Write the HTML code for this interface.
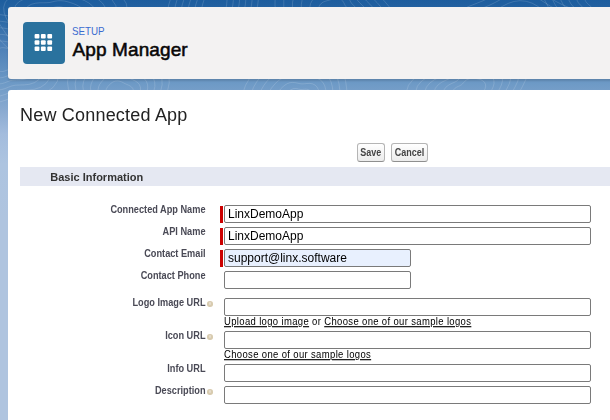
<!DOCTYPE html>
<html><head><meta charset="utf-8">
<style>
html,body{margin:0;padding:0;-webkit-font-smoothing:antialiased}
body{width:610px;height:420px;overflow:hidden;position:relative;font-family:"Liberation Sans",sans-serif;
background:linear-gradient(to bottom,#1d5d9e 0px,#2d6aa6 22px,#4a7eb6 44px,#6e9ac6 84px,#88a9d0 109px,#a3bcdd 134px,#adc4e0 164px,#afc4df 220px,#afc4df 420px);}
.abs{position:absolute;white-space:nowrap}
#hdr{position:absolute;left:8px;top:7px;width:640px;height:72px;background:#f3f2f2;border-radius:3px;box-shadow:0 2px 2px rgba(0,0,0,.12)}
#icon{position:absolute;left:23px;top:22px;width:42px;height:42px;background:#2a729e;border-radius:4px}
.dot{position:absolute;width:4.7px;height:4.7px;background:#fff;border-radius:1px}
#setup{left:72px;top:24.5px;font-size:11px;line-height:12px;color:#3a6bd0;transform:scaleX(0.89);transform-origin:0 0}
#appm{left:72.6px;top:39.5px;letter-spacing:0.1px;font-size:19px;line-height:20px;font-weight:normal;-webkit-text-stroke:0.55px #080707;color:#080707;transform:scaleX(1.0);transform-origin:0 0}
#card{position:absolute;left:8px;top:90px;width:640px;height:400px;background:#fff;border-radius:3px}
#title{left:20px;top:105px;letter-spacing:0.2px;font-size:18px;line-height:20px;color:#222}
.btn{position:absolute;top:143px;height:19px;box-sizing:border-box;border:1px solid #b5b5b5;border-bottom-color:#8f8f8f;border-radius:3px;background:linear-gradient(#fff,#ececec);font-size:10px;font-weight:bold;color:#454545;text-align:center;line-height:17px}
.btn span{display:inline-block;transform:scaleX(0.9)}
#band{position:absolute;left:20px;top:167px;width:600px;height:19px;background:#e5e8f2}
#bi{left:50.3px;top:170px;font-size:11px;line-height:14px;font-weight:bold;color:#333}
.lbl{position:absolute;right:404.5px;font-size:9.2px;line-height:11px;font-weight:bold;color:#4a4a56;text-align:right;white-space:nowrap;transform:translateY(0.4px) scaleY(1.1);transform-origin:0 8.5px}
.req{position:absolute;left:220px;width:3px;background:#c00}
.inp{position:absolute;left:224px;height:18px;box-sizing:border-box;border:1px solid #7a7a7a;border-radius:2px;background:#fff;font-size:12px;line-height:16px;color:#000;padding-left:3px;white-space:nowrap}
.help{position:absolute;left:206.8px;width:6.2px;height:6.2px;border-radius:45%;background:#d8cbaf}
.help:after{content:"";position:absolute;left:2.6px;top:1.3px;width:1.8px;height:3px;background:#e6ddcc;border-radius:1px}
.lnk{position:absolute;left:224px;font-size:9.5px;letter-spacing:0.345px;line-height:12px;color:#000;transform:scaleY(1.13);transform-origin:0 9px;white-space:nowrap}
.lnk u{text-decoration:underline}
</style></head><body>
<svg id="topo" width="610" height="130" style="position:absolute;left:0;top:0" fill="none" stroke="rgba(255,255,255,0.14)" stroke-width="1"><path d="M74.2,18.0 L73.0,19.8 L71.6,21.4 L70.1,22.8 L68.8,24.1 L67.7,25.5 L66.6,26.9 L65.3,28.3 L63.6,29.5 L61.6,30.2 L59.4,30.5 L57.1,30.4 L55.0,30.0 L53.0,29.5 L51.1,29.1 L49.2,28.8 L47.2,28.4 L45.2,27.8 L43.4,26.9 L41.8,25.8 L40.5,24.4 L39.4,23.0 L38.4,21.4 L37.3,19.8 L36.3,18.0 L35.6,16.0 L35.4,14.0 L36.0,12.0 L37.5,10.2 L39.8,9.0 L42.5,8.3 L45.1,8.1 L47.6,8.1 L49.7,8.1 L51.5,7.9 L53.2,7.5 L55.0,7.1 L56.9,6.8 L58.9,6.7 L61.0,6.9 L63.0,7.4 L65.0,8.0 L67.1,8.7 L69.2,9.6 L71.3,10.8 L73.1,12.2 L74.3,14.0 L74.6,16.0 L74.2,18.0Z"/><path d="M84.5,18.0 L82.7,20.8 L80.5,23.3 L78.2,25.4 L76.2,27.4 L74.5,29.5 L72.8,31.7 L70.8,33.8 L68.2,35.6 L65.1,36.8 L61.7,37.3 L58.3,37.1 L55.0,36.5 L52.0,35.8 L49.0,35.1 L46.1,34.6 L43.0,34.0 L40.0,33.1 L37.1,31.7 L34.7,30.0 L32.7,27.9 L31.0,25.6 L29.4,23.3 L27.8,20.8 L26.3,18.0 L25.1,15.0 L24.8,11.8 L25.8,8.7 L28.1,6.1 L31.6,4.2 L35.7,3.2 L39.8,2.8 L43.6,2.8 L46.8,2.7 L49.6,2.5 L52.2,1.9 L55.0,1.2 L57.9,0.8 L61.0,0.7 L64.2,1.0 L67.3,1.7 L70.4,2.6 L73.6,3.7 L76.9,5.1 L80.1,6.9 L82.8,9.1 L84.6,11.9 L85.2,14.9 L84.5,18.0Z"/><path d="M94.8,18.0 L92.5,21.8 L89.4,25.1 L86.3,28.0 L83.6,30.7 L81.3,33.5 L79.0,36.5 L76.3,39.4 L72.9,41.8 L68.7,43.4 L64.1,44.0 L59.4,43.7 L55.0,42.9 L50.9,42.0 L46.9,41.1 L42.9,40.4 L38.8,39.6 L34.7,38.3 L30.9,36.5 L27.6,34.2 L24.9,31.4 L22.6,28.3 L20.5,25.1 L18.3,21.7 L16.2,18.0 L14.7,13.9 L14.3,9.6 L15.6,5.4 L18.7,1.9 L23.4,-0.6 L28.9,-2.0 L34.5,-2.5 L39.6,-2.5 L43.9,-2.6 L47.7,-3.0 L51.3,-3.7 L55.0,-4.6 L59.0,-5.3 L63.1,-5.4 L67.4,-5.0 L71.5,-4.0 L75.8,-2.8 L80.1,-1.3 L84.5,0.6 L88.9,3.0 L92.6,6.0 L95.0,9.8 L95.8,13.9 L94.8,18.0Z"/><path d="M105.1,18.0 L102.2,22.8 L98.3,26.9 L94.5,30.6 L91.1,34.0 L88.1,37.6 L85.3,41.3 L81.8,44.9 L77.5,48.0 L72.2,50.0 L66.4,50.8 L60.5,50.4 L55.0,49.4 L49.8,48.2 L44.9,47.1 L39.8,46.2 L34.6,45.1 L29.5,43.6 L24.7,41.3 L20.5,38.4 L17.1,34.8 L14.3,31.0 L11.6,27.0 L8.8,22.7 L6.2,18.0 L4.2,12.9 L3.7,7.4 L5.3,2.2 L9.3,-2.3 L15.2,-5.5 L22.2,-7.2 L29.2,-7.8 L35.6,-7.9 L41.0,-7.9 L45.8,-8.4 L50.3,-9.4 L55.0,-10.5 L60.0,-11.3 L65.3,-11.5 L70.6,-10.9 L75.8,-9.8 L81.1,-8.2 L86.6,-6.3 L92.2,-4.0 L97.7,-0.9 L102.3,2.9 L105.4,7.6 L106.4,12.8 L105.1,18.0Z"/><path d="M115.5,18.0 L111.9,23.8 L107.2,28.8 L102.6,33.2 L98.5,37.3 L95.0,41.6 L91.5,46.1 L87.4,50.5 L82.1,54.1 L75.8,56.6 L68.8,57.5 L61.7,57.1 L55.0,55.8 L48.8,54.4 L42.8,53.1 L36.7,52.0 L30.4,50.7 L24.2,48.9 L18.4,46.1 L13.4,42.5 L9.3,38.3 L5.9,33.7 L2.6,28.8 L-0.7,23.6 L-3.9,18.0 L-6.3,11.8 L-6.9,5.2 L-4.9,-1.1 L-0.1,-6.5 L7.0,-10.3 L15.4,-12.4 L23.9,-13.2 L31.6,-13.2 L38.2,-13.3 L43.9,-13.9 L49.3,-15.0 L55.0,-16.3 L61.0,-17.3 L67.4,-17.5 L73.8,-16.9 L80.1,-15.5 L86.5,-13.6 L93.1,-11.3 L99.9,-8.5 L106.4,-4.8 L112.0,-0.2 L115.8,5.5 L116.9,11.7 L115.5,18.0Z"/><path d="M125.8,18.0 L121.6,24.7 L116.2,30.6 L110.7,35.7 L105.9,40.6 L101.8,45.6 L97.7,50.9 L92.9,56.0 L86.8,60.3 L79.3,63.2 L71.1,64.2 L62.8,63.8 L55.0,62.3 L47.7,60.6 L40.7,59.1 L33.6,57.8 L26.2,56.3 L18.9,54.1 L12.2,51.0 L6.3,46.7 L1.5,41.7 L-2.5,36.3 L-6.3,30.6 L-10.2,24.6 L-13.9,18.0 L-16.7,10.7 L-17.4,3.1 L-15.1,-4.3 L-9.5,-10.6 L-1.2,-15.1 L8.7,-17.6 L18.6,-18.5 L27.6,-18.5 L35.3,-18.6 L42.0,-19.3 L48.4,-20.7 L55.0,-22.2 L62.1,-23.3 L69.5,-23.6 L77.0,-22.8 L84.4,-21.2 L91.9,-19.0 L99.6,-16.3 L107.5,-13.0 L115.2,-8.7 L121.8,-3.3 L126.2,3.3 L127.5,10.7 L125.8,18.0Z"/><path d="M226.6,5.0 L226.3,6.5 L225.8,7.9 L225.1,9.2 L224.3,10.4 L223.6,11.6 L222.9,12.9 L222.2,14.4 L221.4,16.0 L220.3,17.7 L218.8,19.1 L217.0,20.1 L215.0,20.3 L213.0,19.8 L211.3,18.9 L209.8,17.6 L208.4,16.4 L207.1,15.3 L205.8,14.2 L204.5,13.0 L203.4,11.7 L202.6,10.2 L202.1,8.4 L202.1,6.7 L202.5,5.0 L202.9,3.4 L203.4,1.9 L203.9,0.4 L204.5,-1.1 L205.3,-2.5 L206.3,-3.7 L207.5,-4.7 L209.0,-5.4 L210.5,-5.9 L212.0,-6.4 L213.4,-6.9 L215.0,-7.6 L216.8,-8.4 L218.8,-9.0 L220.9,-9.2 L223.0,-8.8 L224.7,-7.7 L226.0,-6.0 L226.7,-4.0 L227.0,-1.9 L227.0,0.0 L226.9,1.8 L226.7,3.5 L226.6,5.0Z"/><path d="M232.8,5.0 L232.3,7.3 L231.6,9.4 L230.6,11.4 L229.4,13.3 L228.2,15.1 L227.1,17.1 L226.1,19.4 L224.8,22.0 L223.1,24.6 L220.8,26.8 L218.0,28.2 L215.0,28.5 L212.0,27.8 L209.3,26.3 L206.9,24.4 L204.9,22.5 L202.9,20.8 L200.9,19.1 L198.9,17.3 L197.2,15.3 L195.9,12.9 L195.2,10.3 L195.2,7.6 L195.7,5.0 L196.5,2.6 L197.2,0.2 L198.0,-2.0 L198.9,-4.3 L200.0,-6.5 L201.6,-8.4 L203.5,-10.0 L205.7,-11.1 L208.0,-11.8 L210.3,-12.5 L212.6,-13.3 L215.0,-14.4 L217.7,-15.6 L220.8,-16.6 L224.1,-16.9 L227.3,-16.2 L229.9,-14.5 L231.9,-11.9 L233.0,-8.8 L233.4,-5.6 L233.4,-2.6 L233.3,0.1 L233.1,2.6 L232.8,5.0Z"/><path d="M239.0,5.0 L238.4,8.1 L237.4,11.0 L236.0,13.7 L234.4,16.2 L232.8,18.7 L231.4,21.4 L229.9,24.5 L228.2,27.9 L225.9,31.4 L222.9,34.4 L219.1,36.3 L215.0,36.7 L210.9,35.8 L207.3,33.8 L204.1,31.2 L201.3,28.7 L198.7,26.3 L196.0,24.0 L193.3,21.7 L190.9,18.9 L189.2,15.7 L188.3,12.2 L188.3,8.5 L189.0,5.0 L190.0,1.7 L191.0,-1.4 L192.0,-4.5 L193.2,-7.6 L194.8,-10.5 L196.8,-13.2 L199.5,-15.2 L202.5,-16.7 L205.6,-17.7 L208.7,-18.6 L211.7,-19.7 L215.0,-21.2 L218.7,-22.8 L222.8,-24.2 L227.3,-24.6 L231.5,-23.7 L235.2,-21.3 L237.8,-17.8 L239.3,-13.6 L239.8,-9.3 L239.9,-5.3 L239.7,-1.6 L239.4,1.8 L239.0,5.0Z"/><path d="M245.3,5.0 L244.5,8.9 L243.2,12.6 L241.4,16.0 L239.4,19.1 L237.5,22.2 L235.6,25.6 L233.8,29.5 L231.7,33.9 L228.8,38.3 L224.9,42.0 L220.2,44.4 L215.0,44.9 L209.9,43.8 L205.3,41.2 L201.3,38.0 L197.8,34.8 L194.4,31.8 L191.0,29.0 L187.7,26.0 L184.7,22.5 L182.5,18.5 L181.4,14.0 L181.4,9.4 L182.2,5.0 L183.5,0.8 L184.8,-3.1 L186.1,-7.0 L187.6,-10.8 L189.5,-14.6 L192.1,-17.9 L195.5,-20.5 L199.2,-22.3 L203.2,-23.6 L207.0,-24.7 L210.9,-26.1 L215.0,-28.0 L219.6,-30.1 L224.8,-31.7 L230.4,-32.2 L235.8,-31.1 L240.4,-28.1 L243.7,-23.7 L245.6,-18.5 L246.3,-13.1 L246.3,-8.0 L246.1,-3.3 L245.7,1.0 L245.3,5.0Z"/><path d="M251.5,5.0 L250.6,9.7 L249.0,14.1 L246.9,18.2 L244.5,22.0 L242.1,25.8 L239.9,29.9 L237.7,34.6 L235.1,39.8 L231.6,45.1 L227.0,49.6 L221.3,52.5 L215.0,53.2 L208.8,51.7 L203.3,48.7 L198.5,44.9 L194.2,41.0 L190.2,37.3 L186.1,33.9 L182.0,30.3 L178.4,26.1 L175.8,21.2 L174.4,15.9 L174.5,10.3 L175.5,5.0 L177.0,-0.0 L178.6,-4.8 L180.1,-9.4 L181.9,-14.1 L184.3,-18.6 L187.4,-22.6 L191.4,-25.7 L196.0,-27.9 L200.7,-29.4 L205.4,-30.8 L210.1,-32.5 L215.0,-34.8 L220.6,-37.3 L226.9,-39.3 L233.6,-39.9 L240.1,-38.5 L245.6,-34.9 L249.6,-29.6 L251.9,-23.3 L252.7,-16.8 L252.7,-10.6 L252.4,-5.0 L252.1,0.1 L251.5,5.0Z"/><path d="M257.7,5.0 L256.6,10.5 L254.8,15.7 L252.3,20.5 L249.5,24.9 L246.7,29.3 L244.1,34.1 L241.6,39.6 L238.5,45.8 L234.4,52.0 L229.0,57.2 L222.3,60.6 L215.0,61.4 L207.8,59.7 L201.3,56.1 L195.7,51.7 L190.7,47.1 L185.9,42.9 L181.2,38.8 L176.4,34.6 L172.2,29.7 L169.1,24.0 L167.5,17.7 L167.5,11.2 L168.7,5.0 L170.5,-0.9 L172.4,-6.4 L174.2,-11.9 L176.3,-17.4 L179.0,-22.6 L182.7,-27.3 L187.4,-30.9 L192.8,-33.5 L198.3,-35.3 L203.8,-36.9 L209.2,-38.9 L215.0,-41.6 L221.5,-44.5 L228.9,-46.9 L236.8,-47.6 L244.4,-45.9 L250.9,-41.8 L255.5,-35.5 L258.2,-28.1 L259.2,-20.5 L259.2,-13.3 L258.8,-6.7 L258.4,-0.7 L257.7,5.0Z"/><path d="M350.5,12.0 L350.9,13.7 L351.0,15.6 L350.6,17.4 L349.9,19.2 L349.0,21.0 L347.8,22.7 L346.3,24.3 L344.3,25.4 L342.0,26.1 L339.5,26.0 L337.1,25.4 L335.0,24.3 L333.2,23.1 L331.8,22.1 L330.3,21.4 L328.8,21.0 L327.0,20.7 L325.1,20.3 L323.3,19.5 L321.7,18.4 L320.5,17.0 L319.8,15.4 L319.3,13.7 L319.0,12.0 L318.8,10.2 L318.8,8.4 L319.1,6.5 L320.0,4.8 L321.4,3.3 L323.1,2.1 L325.1,1.3 L327.2,0.7 L329.1,0.2 L331.0,-0.4 L333.0,-1.0 L335.0,-1.4 L337.2,-1.6 L339.3,-1.3 L341.2,-0.4 L342.7,0.9 L343.7,2.5 L344.5,4.1 L345.2,5.5 L346.1,6.7 L347.1,7.8 L348.4,9.0 L349.6,10.4 L350.5,12.0Z"/><path d="M358.8,12.0 L359.5,14.7 L359.6,17.5 L359.0,20.3 L358.0,23.1 L356.6,25.8 L354.8,28.5 L352.4,30.9 L349.3,32.7 L345.8,33.7 L341.9,33.6 L338.2,32.6 L335.0,30.9 L332.3,29.1 L330.0,27.5 L327.8,26.5 L325.4,25.9 L322.7,25.4 L319.7,24.7 L316.9,23.6 L314.5,21.8 L312.8,19.7 L311.6,17.2 L310.8,14.7 L310.3,12.0 L310.0,9.3 L310.0,6.4 L310.6,3.6 L311.9,0.9 L314.0,-1.4 L316.8,-3.2 L319.8,-4.5 L323.0,-5.4 L326.0,-6.2 L328.9,-7.0 L331.8,-7.9 L335.0,-8.7 L338.3,-9.0 L341.6,-8.4 L344.5,-7.1 L346.8,-5.0 L348.4,-2.6 L349.6,-0.2 L350.7,2.0 L352.0,3.8 L353.7,5.6 L355.6,7.4 L357.4,9.5 L358.8,12.0Z"/><path d="M367.1,12.0 L368.1,15.6 L368.2,19.4 L367.4,23.2 L366.0,26.9 L364.1,30.6 L361.7,34.2 L358.4,37.5 L354.3,39.9 L349.5,41.2 L344.4,41.1 L339.4,39.8 L335.0,37.5 L331.4,35.1 L328.3,33.0 L325.3,31.6 L322.0,30.7 L318.4,30.1 L314.4,29.2 L310.6,27.6 L307.4,25.3 L305.0,22.4 L303.4,19.1 L302.4,15.6 L301.7,12.0 L301.3,8.3 L301.3,4.5 L302.0,0.6 L303.8,-3.0 L306.7,-6.1 L310.4,-8.5 L314.5,-10.2 L318.8,-11.4 L322.8,-12.5 L326.7,-13.7 L330.7,-14.9 L335.0,-15.9 L339.5,-16.3 L343.9,-15.6 L347.8,-13.8 L350.9,-11.0 L353.1,-7.7 L354.7,-4.5 L356.2,-1.6 L358.0,1.0 L360.2,3.3 L362.8,5.8 L365.2,8.7 L367.1,12.0Z"/><path d="M375.5,12.0 L376.7,16.6 L376.8,21.3 L375.8,26.1 L374.1,30.8 L371.7,35.5 L368.6,40.0 L364.5,44.1 L359.4,47.2 L353.3,48.8 L346.8,48.7 L340.5,47.0 L335.0,44.1 L330.4,41.1 L326.5,38.4 L322.8,36.6 L318.7,35.6 L314.0,34.8 L309.1,33.6 L304.3,31.6 L300.2,28.7 L297.2,25.1 L295.2,20.9 L293.9,16.5 L293.0,12.0 L292.5,7.3 L292.5,2.5 L293.5,-2.3 L295.7,-6.9 L299.3,-10.8 L304.0,-13.8 L309.2,-16.0 L314.5,-17.5 L319.7,-18.9 L324.6,-20.3 L329.6,-21.9 L335.0,-23.2 L340.6,-23.6 L346.2,-22.8 L351.1,-20.4 L355.0,-16.9 L357.8,-12.8 L359.9,-8.7 L361.7,-5.1 L363.9,-1.9 L366.7,1.1 L369.9,4.2 L373.1,7.8 L375.5,12.0Z"/><path d="M383.8,12.0 L385.3,17.5 L385.4,23.2 L384.2,29.0 L382.1,34.7 L379.2,40.3 L375.5,45.7 L370.6,50.7 L364.4,54.4 L357.1,56.4 L349.2,56.3 L341.7,54.2 L335.0,50.8 L329.5,47.0 L324.8,43.9 L320.2,41.7 L315.3,40.4 L309.7,39.5 L303.7,38.1 L297.9,35.7 L293.0,32.2 L289.4,27.7 L287.0,22.7 L285.4,17.4 L284.4,12.0 L283.8,6.4 L283.8,0.6 L285.0,-5.3 L287.6,-10.8 L292.0,-15.5 L297.6,-19.2 L303.9,-21.7 L310.3,-23.6 L316.5,-25.2 L322.5,-27.0 L328.5,-28.9 L335.0,-30.4 L341.8,-31.0 L348.5,-29.9 L354.4,-27.1 L359.2,-22.9 L362.5,-17.9 L365.0,-13.0 L367.2,-8.6 L369.9,-4.8 L373.2,-1.2 L377.1,2.6 L380.9,7.0 L383.8,12.0Z"/><path d="M392.1,12.0 L393.9,18.5 L394.0,25.2 L392.6,31.9 L390.1,38.5 L386.8,45.1 L382.4,51.5 L376.7,57.3 L369.4,61.7 L360.8,64.0 L351.7,63.8 L342.8,61.4 L335.0,57.4 L328.5,53.0 L323.0,49.3 L317.7,46.8 L311.9,45.3 L305.4,44.1 L298.4,42.5 L291.6,39.7 L285.9,35.6 L281.6,30.4 L278.8,24.6 L277.0,18.4 L275.8,12.0 L275.0,5.4 L275.1,-1.4 L276.4,-8.2 L279.6,-14.7 L284.6,-20.2 L291.2,-24.5 L298.6,-27.5 L306.1,-29.7 L313.3,-31.6 L320.3,-33.7 L327.4,-35.9 L335.0,-37.7 L342.9,-38.3 L350.8,-37.1 L357.8,-33.8 L363.3,-28.8 L367.3,-23.0 L370.1,-17.3 L372.7,-12.1 L375.8,-7.6 L379.8,-3.5 L384.3,1.0 L388.7,6.1 L392.1,12.0Z"/><path d="M540.5,35.0 L540.3,36.9 L539.7,38.8 L538.8,40.6 L537.6,42.3 L536.1,43.8 L534.1,45.1 L531.8,45.9 L529.1,46.3 L526.4,46.1 L524.0,45.6 L521.9,45.1 L520.0,44.8 L518.2,44.8 L516.2,45.2 L513.8,45.6 L511.2,45.9 L508.5,45.7 L506.0,45.0 L504.0,43.8 L502.5,42.2 L501.4,40.5 L500.6,38.7 L500.0,36.9 L499.8,35.0 L499.9,33.1 L500.7,31.3 L502.0,29.7 L503.9,28.4 L506.0,27.3 L508.1,26.5 L510.0,25.7 L511.8,24.9 L513.6,23.9 L515.5,22.9 L517.6,22.2 L520.0,21.9 L522.4,22.1 L524.6,22.8 L526.5,23.8 L528.1,24.9 L529.7,25.9 L531.5,26.8 L533.4,27.6 L535.5,28.6 L537.5,29.8 L539.1,31.3 L540.2,33.1 L540.5,35.0Z"/><path d="M551.5,35.0 L551.2,37.9 L550.3,40.8 L548.9,43.5 L547.1,46.2 L544.8,48.6 L541.7,50.5 L538.1,51.8 L534.0,52.3 L529.9,52.1 L526.1,51.3 L522.9,50.5 L520.0,50.0 L517.2,50.1 L514.1,50.7 L510.5,51.3 L506.5,51.7 L502.3,51.4 L498.5,50.3 L495.4,48.5 L493.0,46.1 L491.3,43.5 L490.1,40.7 L489.2,37.9 L488.9,35.0 L489.1,32.1 L490.3,29.3 L492.4,26.8 L495.2,24.8 L498.4,23.2 L501.7,21.9 L504.7,20.7 L507.4,19.4 L510.1,17.9 L513.0,16.4 L516.4,15.3 L520.0,14.8 L523.7,15.2 L527.0,16.2 L530.0,17.8 L532.5,19.5 L535.0,21.0 L537.7,22.4 L540.7,23.7 L543.9,25.1 L547.0,27.0 L549.5,29.4 L551.0,32.1 L551.5,35.0Z"/><path d="M562.6,35.0 L562.1,39.0 L560.9,42.8 L559.0,46.5 L556.6,50.1 L553.4,53.3 L549.4,56.0 L544.4,57.7 L538.9,58.4 L533.4,58.0 L528.3,57.0 L523.9,55.9 L520.0,55.3 L516.2,55.4 L512.1,56.1 L507.2,57.1 L501.8,57.6 L496.2,57.2 L491.0,55.7 L486.8,53.2 L483.6,50.0 L481.3,46.5 L479.6,42.7 L478.5,38.9 L477.9,35.0 L478.3,31.1 L479.9,27.3 L482.7,24.0 L486.5,21.2 L490.9,19.0 L495.3,17.3 L499.3,15.7 L503.0,13.9 L506.6,11.9 L510.6,9.9 L515.1,8.4 L520.0,7.7 L524.9,8.2 L529.5,9.7 L533.5,11.8 L536.9,14.1 L540.2,16.2 L543.8,18.0 L547.9,19.7 L552.3,21.7 L556.4,24.2 L559.8,27.4 L561.9,31.1 L562.6,35.0Z"/><path d="M573.6,35.0 L573.1,40.0 L571.5,44.8 L569.1,49.5 L566.1,54.0 L562.1,58.1 L557.0,61.4 L550.7,63.6 L543.8,64.5 L536.8,64.0 L530.4,62.7 L524.9,61.3 L520.0,60.6 L515.3,60.7 L510.0,61.6 L503.9,62.8 L497.0,63.4 L490.0,62.9 L483.5,61.1 L478.2,57.9 L474.1,53.9 L471.2,49.4 L469.2,44.7 L467.7,39.9 L467.0,35.0 L467.5,30.1 L469.4,25.3 L473.0,21.1 L477.8,17.6 L483.4,14.9 L488.8,12.7 L493.9,10.7 L498.6,8.5 L503.2,5.9 L508.2,3.4 L513.8,1.5 L520.0,0.7 L526.2,1.3 L532.0,3.1 L536.9,5.8 L541.3,8.7 L545.5,11.3 L550.0,13.6 L555.2,15.7 L560.6,18.2 L565.9,21.4 L570.1,25.4 L572.7,30.0 L573.6,35.0Z"/><path d="M584.7,35.0 L584.0,41.0 L582.1,46.9 L579.2,52.5 L575.5,57.9 L570.7,62.8 L564.6,66.8 L557.1,69.5 L548.7,70.5 L540.3,70.0 L532.5,68.4 L525.9,66.8 L520.0,65.8 L514.3,66.0 L508.0,67.1 L500.6,68.5 L492.3,69.3 L483.8,68.7 L476.0,66.4 L469.5,62.7 L464.7,57.8 L461.2,52.4 L458.7,46.7 L457.0,40.9 L456.1,35.0 L456.7,29.0 L459.0,23.3 L463.3,18.2 L469.2,14.0 L475.8,10.8 L482.4,8.2 L488.5,5.7 L494.1,3.0 L499.7,-0.0 L505.7,-3.1 L512.6,-5.4 L520.0,-6.4 L527.5,-5.7 L534.4,-3.4 L540.4,-0.2 L545.7,3.2 L550.7,6.4 L556.2,9.1 L562.4,11.8 L569.0,14.8 L575.3,18.6 L580.4,23.4 L583.6,29.0 L584.7,35.0Z"/><path d="M595.7,35.0 L594.9,42.0 L592.6,48.9 L589.3,55.5 L585.0,61.8 L579.4,67.6 L572.2,72.3 L563.4,75.4 L553.6,76.6 L543.7,75.9 L534.7,74.1 L526.9,72.2 L520.0,71.1 L513.3,71.3 L505.9,72.6 L497.3,74.2 L487.6,75.1 L477.6,74.4 L468.5,71.8 L460.9,67.4 L455.2,61.7 L451.1,55.4 L448.2,48.7 L446.2,41.9 L445.2,35.0 L445.9,28.0 L448.6,21.3 L453.6,15.4 L460.5,10.5 L468.3,6.6 L476.0,3.6 L483.2,0.7 L489.7,-2.5 L496.2,-6.0 L503.3,-9.6 L511.3,-12.3 L520.0,-13.5 L528.8,-12.6 L536.9,-10.0 L543.9,-6.2 L550.1,-2.2 L556.0,1.5 L562.4,4.7 L569.6,7.8 L577.4,11.3 L584.8,15.8 L590.7,21.5 L594.4,28.0 L595.7,35.0Z"/><path d="M132.5,95.0 L132.0,96.4 L131.8,97.9 L131.7,99.4 L131.6,101.1 L131.3,102.9 L130.6,104.6 L129.4,106.2 L127.9,107.4 L126.1,108.4 L124.2,109.1 L122.1,109.6 L120.0,109.9 L117.8,109.9 L115.7,109.5 L113.9,108.4 L112.4,106.9 L111.5,105.1 L111.0,103.1 L110.8,101.4 L110.5,100.0 L109.9,98.8 L109.0,97.7 L107.9,96.4 L106.8,95.0 L106.0,93.3 L105.8,91.5 L106.1,89.8 L106.8,88.1 L107.9,86.5 L109.1,85.1 L110.5,83.8 L112.1,82.5 L113.9,81.5 L115.9,81.0 L118.0,80.9 L120.0,81.3 L121.9,82.0 L123.6,82.9 L125.1,83.7 L126.7,84.4 L128.4,85.1 L130.0,85.9 L131.5,87.0 L132.7,88.3 L133.3,90.0 L133.3,91.8 L133.0,93.4 L132.5,95.0Z"/><path d="M139.2,95.0 L138.5,97.2 L138.1,99.4 L138.0,101.8 L137.9,104.4 L137.4,107.1 L136.3,109.8 L134.5,112.2 L132.1,114.1 L129.4,115.6 L126.4,116.7 L123.3,117.5 L120.0,118.0 L116.7,118.0 L113.4,117.2 L110.6,115.7 L108.4,113.3 L106.9,110.5 L106.2,107.5 L105.8,104.9 L105.4,102.7 L104.5,100.8 L103.1,99.1 L101.4,97.2 L99.7,95.0 L98.5,92.4 L98.1,89.7 L98.6,86.9 L99.7,84.4 L101.4,82.0 L103.3,79.8 L105.4,77.7 L107.8,75.8 L110.6,74.3 L113.6,73.4 L116.9,73.3 L120.0,73.9 L122.9,75.0 L125.5,76.4 L127.9,77.6 L130.3,78.7 L132.8,79.8 L135.4,81.0 L137.7,82.6 L139.5,84.8 L140.4,87.3 L140.5,90.0 L140.0,92.6 L139.2,95.0Z"/><path d="M145.9,95.0 L145.0,98.0 L144.5,101.0 L144.3,104.2 L144.2,107.7 L143.5,111.4 L142.0,115.0 L139.6,118.2 L136.4,120.8 L132.6,122.8 L128.6,124.3 L124.4,125.4 L120.0,126.0 L115.5,126.0 L111.2,125.0 L107.3,122.9 L104.3,119.7 L102.4,115.9 L101.4,111.9 L100.9,108.3 L100.3,105.4 L99.1,102.9 L97.2,100.6 L94.9,98.0 L92.6,95.0 L91.0,91.5 L90.4,87.8 L91.1,84.1 L92.6,80.6 L94.8,77.4 L97.4,74.5 L100.3,71.6 L103.5,69.1 L107.3,67.1 L111.4,65.8 L115.8,65.7 L120.0,66.5 L123.9,68.0 L127.4,69.8 L130.7,71.5 L133.9,73.0 L137.3,74.5 L140.8,76.1 L143.9,78.3 L146.3,81.2 L147.6,84.6 L147.7,88.3 L146.9,91.8 L145.9,95.0Z"/><path d="M152.6,95.0 L151.4,98.8 L150.8,102.5 L150.7,106.5 L150.4,111.0 L149.6,115.6 L147.7,120.2 L144.6,124.2 L140.6,127.4 L135.9,129.9 L130.9,131.9 L125.5,133.3 L120.0,134.1 L114.3,134.1 L108.9,132.8 L104.0,130.1 L100.2,126.1 L97.8,121.3 L96.6,116.3 L95.9,111.8 L95.2,108.0 L93.7,104.9 L91.3,102.0 L88.3,98.8 L85.5,95.0 L83.4,90.6 L82.8,85.9 L83.6,81.3 L85.5,76.9 L88.3,72.9 L91.5,69.1 L95.2,65.6 L99.3,62.4 L104.0,59.8 L109.2,58.3 L114.7,58.1 L120.0,59.1 L124.9,61.0 L129.3,63.3 L133.5,65.5 L137.6,67.4 L141.8,69.1 L146.2,71.2 L150.1,74.0 L153.1,77.6 L154.7,81.9 L154.9,86.5 L153.9,90.9 L152.6,95.0Z"/><path d="M159.3,95.0 L157.9,99.5 L157.2,104.1 L157.0,108.9 L156.7,114.3 L155.7,119.9 L153.4,125.4 L149.7,130.2 L144.8,134.1 L139.2,137.1 L133.1,139.4 L126.7,141.1 L120.0,142.1 L113.2,142.1 L106.6,140.6 L100.7,137.4 L96.2,132.5 L93.2,126.7 L91.7,120.7 L91.0,115.3 L90.1,110.7 L88.3,106.9 L85.4,103.4 L81.8,99.6 L78.4,95.0 L75.9,89.7 L75.1,84.1 L76.1,78.5 L78.4,73.2 L81.8,68.3 L85.7,63.8 L90.1,59.5 L95.0,55.7 L100.7,52.6 L107.0,50.7 L113.5,50.5 L120.0,51.7 L125.9,54.0 L131.3,56.8 L136.2,59.4 L141.2,61.7 L146.3,63.8 L151.6,66.3 L156.4,69.6 L160.0,74.0 L161.9,79.2 L162.1,84.8 L160.9,90.1 L159.3,95.0Z"/><path d="M166.0,95.0 L164.4,100.3 L163.5,105.6 L163.3,111.3 L163.0,117.6 L161.8,124.1 L159.1,130.5 L154.8,136.2 L149.1,140.8 L142.5,144.3 L135.3,147.0 L127.8,149.0 L120.0,150.2 L112.0,150.1 L104.3,148.4 L97.4,144.6 L92.1,138.9 L88.7,132.1 L86.9,125.1 L86.0,118.7 L84.9,113.4 L82.9,109.0 L79.5,104.9 L75.3,100.4 L71.2,95.0 L68.4,88.8 L67.5,82.2 L68.6,75.6 L71.3,69.5 L75.2,63.8 L79.8,58.5 L84.9,53.5 L90.7,48.9 L97.4,45.3 L104.7,43.2 L112.4,42.9 L120.0,44.3 L126.9,47.0 L133.2,50.2 L139.0,53.3 L144.8,56.0 L150.8,58.5 L157.0,61.4 L162.6,65.3 L166.8,70.4 L169.1,76.5 L169.2,83.0 L167.9,89.3 L166.0,95.0Z"/><path d="M313.0,100.0 L313.2,101.7 L313.3,103.6 L313.1,105.4 L312.4,107.2 L311.3,108.7 L309.9,109.9 L308.3,110.8 L306.7,111.5 L305.0,112.1 L303.4,112.6 L301.7,112.9 L300.0,112.9 L298.4,112.4 L296.9,111.6 L295.7,110.4 L294.7,109.2 L293.7,108.2 L292.6,107.4 L291.3,106.7 L289.6,106.0 L287.9,105.0 L286.2,103.7 L285.0,102.0 L284.5,100.0 L284.6,98.0 L285.2,96.0 L286.2,94.3 L287.5,92.8 L288.8,91.4 L290.2,90.2 L291.8,89.3 L293.5,88.7 L295.3,88.6 L297.0,88.7 L298.6,89.1 L300.0,89.4 L301.4,89.5 L302.8,89.4 L304.5,89.2 L306.2,89.2 L308.1,89.5 L309.7,90.3 L311.0,91.5 L311.9,93.1 L312.4,94.9 L312.6,96.6 L312.8,98.3 L313.0,100.0Z"/><path d="M320.0,100.0 L320.4,102.7 L320.5,105.5 L320.2,108.4 L319.1,111.1 L317.4,113.4 L315.2,115.2 L312.8,116.6 L310.2,117.7 L307.7,118.7 L305.2,119.4 L302.6,119.8 L300.0,119.8 L297.5,119.1 L295.2,117.8 L293.4,116.0 L291.8,114.2 L290.3,112.6 L288.7,111.3 L286.6,110.3 L284.1,109.2 L281.3,107.7 L278.8,105.7 L277.0,103.0 L276.1,100.0 L276.3,96.9 L277.3,93.9 L278.8,91.2 L280.7,88.9 L282.8,86.8 L285.0,85.0 L287.4,83.6 L290.0,82.7 L292.7,82.4 L295.4,82.7 L297.8,83.2 L300.0,83.7 L302.1,83.9 L304.4,83.8 L306.9,83.5 L309.6,83.4 L312.4,83.8 L315.0,85.0 L317.0,87.0 L318.3,89.4 L319.0,92.1 L319.4,94.8 L319.7,97.4 L320.0,100.0Z"/><path d="M327.0,100.0 L327.5,103.6 L327.7,107.4 L327.2,111.3 L325.8,114.9 L323.5,118.1 L320.6,120.6 L317.2,122.5 L313.8,124.0 L310.4,125.2 L307.0,126.2 L303.5,126.8 L300.0,126.7 L296.6,125.8 L293.6,124.0 L291.0,121.6 L288.9,119.2 L287.0,117.0 L284.7,115.3 L281.9,113.9 L278.5,112.4 L274.8,110.4 L271.4,107.7 L268.9,104.1 L267.8,100.0 L268.0,95.8 L269.3,91.8 L271.4,88.2 L274.0,85.0 L276.7,82.1 L279.7,79.7 L283.0,77.8 L286.5,76.6 L290.2,76.2 L293.7,76.6 L297.0,77.3 L300.0,78.0 L302.9,78.3 L305.9,78.1 L309.3,77.7 L313.0,77.5 L316.8,78.1 L320.2,79.8 L322.9,82.4 L324.7,85.7 L325.7,89.4 L326.1,93.0 L326.5,96.5 L327.0,100.0Z"/><path d="M334.0,100.0 L334.6,104.6 L334.9,109.3 L334.3,114.2 L332.5,118.8 L329.6,122.7 L325.9,125.9 L321.7,128.3 L317.4,130.2 L313.1,131.7 L308.8,133.0 L304.4,133.7 L300.0,133.6 L295.7,132.5 L291.9,130.2 L288.7,127.3 L286.1,124.1 L283.6,121.4 L280.8,119.2 L277.2,117.5 L272.9,115.6 L268.3,113.1 L264.0,109.6 L260.9,105.2 L259.4,100.0 L259.7,94.7 L261.4,89.6 L264.0,85.1 L267.2,81.1 L270.7,77.5 L274.4,74.4 L278.6,72.0 L283.0,70.6 L287.6,70.1 L292.1,70.5 L296.2,71.4 L300.0,72.3 L303.6,72.6 L307.4,72.4 L311.6,71.9 L316.3,71.7 L321.1,72.5 L325.5,74.5 L328.9,77.8 L331.1,82.0 L332.3,86.6 L332.9,91.2 L333.4,95.6 L334.0,100.0Z"/><path d="M341.0,100.0 L341.8,105.5 L342.1,111.3 L341.4,117.1 L339.2,122.7 L335.8,127.4 L331.2,131.2 L326.2,134.1 L321.0,136.4 L315.8,138.2 L310.7,139.7 L305.4,140.7 L300.0,140.6 L294.8,139.2 L290.2,136.4 L286.4,132.9 L283.2,129.1 L280.2,125.8 L276.8,123.2 L272.5,121.1 L267.3,118.9 L261.7,115.8 L256.6,111.6 L252.8,106.2 L251.0,100.0 L251.4,93.6 L253.4,87.5 L256.6,82.0 L260.5,77.2 L264.6,72.9 L269.2,69.2 L274.1,66.3 L279.5,64.5 L285.1,63.9 L290.5,64.4 L295.5,65.5 L300.0,66.5 L304.3,67.0 L308.9,66.7 L314.0,66.1 L319.7,65.9 L325.5,66.8 L330.7,69.3 L334.8,73.3 L337.5,78.3 L339.0,83.9 L339.7,89.4 L340.3,94.7 L341.0,100.0Z"/><path d="M348.0,100.0 L348.9,106.4 L349.3,113.2 L348.4,120.1 L345.9,126.5 L341.9,132.1 L336.6,136.6 L330.7,139.9 L324.6,142.6 L318.5,144.8 L312.5,146.5 L306.3,147.6 L300.0,147.5 L294.0,145.8 L288.6,142.7 L284.1,138.5 L280.3,134.1 L276.8,130.2 L272.8,127.2 L267.8,124.7 L261.8,122.1 L255.2,118.6 L249.2,113.6 L244.8,107.3 L242.7,100.0 L243.1,92.5 L245.5,85.4 L249.2,79.0 L253.7,73.3 L258.6,68.2 L263.9,63.9 L269.7,60.5 L276.0,58.4 L282.5,57.8 L288.8,58.4 L294.7,59.6 L300.0,60.8 L305.1,61.3 L310.4,61.0 L316.4,60.3 L323.1,60.0 L329.8,61.1 L336.0,64.0 L340.8,68.7 L343.9,74.7 L345.6,81.1 L346.5,87.5 L347.2,93.8 L348.0,100.0Z"/><path d="M483.4,92.0 L482.8,93.4 L482.5,94.8 L482.5,96.3 L482.3,97.9 L481.8,99.5 L480.8,101.0 L479.4,102.2 L477.7,103.1 L475.8,103.7 L473.9,104.1 L472.0,104.6 L470.0,105.0 L467.9,105.3 L465.7,105.3 L463.6,104.9 L461.6,104.1 L459.9,102.9 L458.5,101.6 L457.2,100.2 L456.0,98.8 L454.7,97.3 L453.6,95.7 L452.9,93.9 L452.7,92.0 L453.3,90.2 L454.6,88.6 L456.4,87.3 L458.3,86.4 L460.0,85.6 L461.4,84.8 L462.5,83.9 L463.5,82.7 L464.7,81.4 L466.2,80.1 L468.0,79.2 L470.0,78.5 L472.2,78.3 L474.4,78.3 L476.7,78.6 L479.0,79.1 L481.2,79.9 L483.2,81.0 L484.7,82.6 L485.5,84.5 L485.6,86.6 L485.1,88.6 L484.3,90.4 L483.4,92.0Z"/><path d="M490.6,92.0 L489.7,94.2 L489.3,96.3 L489.2,98.6 L488.9,101.1 L488.2,103.6 L486.7,105.9 L484.5,107.7 L481.8,109.0 L478.9,110.0 L476.0,110.7 L473.1,111.3 L470.0,112.0 L466.8,112.4 L463.4,112.4 L460.1,111.8 L457.1,110.6 L454.5,108.8 L452.3,106.8 L450.3,104.6 L448.4,102.4 L446.5,100.1 L444.8,97.6 L443.7,94.9 L443.4,92.0 L444.4,89.2 L446.4,86.7 L449.1,84.8 L452.0,83.3 L454.6,82.2 L456.8,81.0 L458.5,79.5 L460.1,77.7 L461.9,75.7 L464.1,73.8 L466.9,72.2 L470.0,71.3 L473.3,70.9 L476.8,70.9 L480.3,71.3 L483.8,72.1 L487.2,73.3 L490.2,75.1 L492.6,77.6 L493.9,80.5 L494.0,83.7 L493.2,86.8 L491.9,89.6 L490.6,92.0Z"/><path d="M497.8,92.0 L496.6,94.9 L496.0,97.8 L495.9,100.9 L495.5,104.3 L494.5,107.7 L492.5,110.8 L489.5,113.2 L485.9,115.0 L482.1,116.3 L478.1,117.2 L474.1,118.1 L470.0,118.9 L465.6,119.5 L461.1,119.6 L456.7,118.8 L452.6,117.1 L449.1,114.7 L446.1,111.9 L443.4,109.0 L440.8,106.0 L438.3,102.9 L436.0,99.6 L434.5,95.9 L434.1,92.0 L435.4,88.2 L438.1,84.9 L441.7,82.2 L445.7,80.3 L449.2,78.7 L452.1,77.1 L454.5,75.1 L456.6,72.7 L459.0,69.9 L462.1,67.4 L465.8,65.3 L470.0,64.0 L474.5,63.5 L479.2,63.5 L483.9,64.1 L488.6,65.1 L493.2,66.8 L497.3,69.2 L500.5,72.5 L502.2,76.5 L502.5,80.8 L501.4,85.0 L499.6,88.8 L497.8,92.0Z"/><path d="M505.0,92.0 L503.5,95.7 L502.8,99.3 L502.6,103.2 L502.2,107.5 L500.9,111.7 L498.3,115.6 L494.6,118.7 L490.1,121.0 L485.2,122.5 L480.2,123.7 L475.2,124.9 L470.0,125.9 L464.5,126.7 L458.8,126.7 L453.2,125.7 L448.1,123.6 L443.6,120.6 L439.9,117.1 L436.5,113.4 L433.3,109.7 L430.1,105.8 L427.2,101.6 L425.2,96.9 L424.8,92.0 L426.4,87.2 L429.8,83.0 L434.4,79.7 L439.4,77.3 L443.9,75.3 L447.5,73.2 L450.4,70.7 L453.1,67.6 L456.2,64.2 L460.0,61.0 L464.7,58.4 L470.0,56.8 L475.7,56.1 L481.5,56.2 L487.5,56.9 L493.4,58.2 L499.2,60.3 L504.4,63.3 L508.4,67.5 L510.6,72.5 L510.9,77.9 L509.5,83.2 L507.3,87.9 L505.0,92.0Z"/><path d="M512.3,92.0 L510.4,96.4 L509.5,100.8 L509.3,105.6 L508.8,110.7 L507.2,115.8 L504.2,120.5 L499.7,124.2 L494.2,126.9 L488.3,128.8 L482.3,130.3 L476.3,131.6 L470.0,132.9 L463.4,133.8 L456.5,133.9 L449.8,132.7 L443.6,130.1 L438.2,126.5 L433.7,122.3 L429.6,117.8 L425.7,113.3 L421.8,108.6 L418.4,103.5 L416.0,97.9 L415.6,92.0 L417.4,86.2 L421.5,81.2 L427.1,77.2 L433.1,74.2 L438.5,71.8 L442.9,69.4 L446.4,66.4 L449.6,62.6 L453.4,58.5 L458.0,54.6 L463.6,51.5 L470.0,49.5 L476.8,48.7 L483.9,48.8 L491.1,49.6 L498.3,51.2 L505.2,53.7 L511.5,57.4 L516.3,62.4 L518.9,68.4 L519.3,75.0 L517.7,81.4 L515.0,87.1 L512.3,92.0Z"/><path d="M519.5,92.0 L517.3,97.2 L516.3,102.3 L516.0,107.9 L515.4,113.8 L513.6,119.9 L510.0,125.3 L504.8,129.7 L498.3,132.9 L491.4,135.1 L484.4,136.8 L477.3,138.4 L470.0,139.9 L462.3,141.0 L454.2,141.0 L446.3,139.6 L439.1,136.7 L432.8,132.4 L427.4,127.5 L422.7,122.2 L418.1,117.0 L413.6,111.5 L409.6,105.5 L406.8,98.9 L406.3,92.0 L408.5,85.2 L413.3,79.3 L419.8,74.7 L426.8,71.2 L433.1,68.4 L438.2,65.5 L442.4,62.0 L446.2,57.6 L450.5,52.8 L455.9,48.2 L462.5,44.6 L470.0,42.3 L478.0,41.3 L486.3,41.4 L494.7,42.4 L503.1,44.2 L511.3,47.2 L518.6,51.5 L524.2,57.4 L527.3,64.4 L527.7,72.1 L525.8,79.5 L522.6,86.2 L519.5,92.0Z"/><path d="M612.2,0.0 L612.3,1.6 L612.5,3.3 L612.7,5.3 L612.7,7.3 L612.2,9.4 L611.2,11.2 L609.6,12.5 L607.6,13.2 L605.5,13.3 L603.5,12.9 L601.6,12.4 L600.0,11.8 L598.5,11.3 L597.1,10.8 L595.7,10.3 L594.5,9.6 L593.3,8.7 L592.2,7.8 L591.2,6.8 L590.0,5.8 L588.7,4.7 L587.3,3.4 L586.0,1.8 L585.0,0.0 L584.6,-2.0 L585.0,-4.0 L586.0,-5.8 L587.5,-7.2 L589.1,-8.3 L590.8,-9.2 L592.3,-10.0 L593.7,-10.9 L595.1,-11.8 L596.6,-12.5 L598.3,-13.0 L600.0,-13.0 L601.7,-12.6 L603.2,-11.9 L604.6,-11.1 L605.9,-10.3 L607.2,-9.4 L608.6,-8.6 L609.8,-7.5 L610.9,-6.3 L611.7,-4.8 L612.1,-3.2 L612.2,-1.6 L612.2,-0.0Z"/><path d="M618.8,0.0 L618.9,2.5 L619.2,5.1 L619.5,8.1 L619.5,11.3 L618.8,14.4 L617.2,17.2 L614.8,19.3 L611.7,20.4 L608.5,20.5 L605.3,19.9 L602.5,19.0 L600.0,18.1 L597.7,17.3 L595.5,16.6 L593.5,15.8 L591.5,14.7 L589.7,13.4 L588.0,12.0 L586.4,10.4 L584.6,8.9 L582.6,7.2 L580.5,5.2 L578.4,2.8 L576.9,0.0 L576.3,-3.1 L576.9,-6.2 L578.4,-8.9 L580.7,-11.1 L583.3,-12.8 L585.8,-14.2 L588.1,-15.5 L590.3,-16.8 L592.5,-18.1 L594.8,-19.3 L597.4,-19.9 L600.0,-20.0 L602.6,-19.4 L604.9,-18.3 L607.1,-17.1 L609.1,-15.8 L611.1,-14.5 L613.2,-13.2 L615.1,-11.6 L616.8,-9.7 L617.9,-7.4 L618.5,-5.0 L618.8,-2.5 L618.8,-0.0Z"/><path d="M625.4,0.0 L625.6,3.4 L625.9,6.9 L626.3,10.9 L626.3,15.2 L625.4,19.5 L623.3,23.3 L620.0,26.0 L615.9,27.5 L611.5,27.6 L607.2,26.9 L603.4,25.7 L600.0,24.5 L596.9,23.4 L594.0,22.4 L591.2,21.3 L588.5,19.9 L586.1,18.1 L583.8,16.2 L581.6,14.1 L579.3,12.0 L576.5,9.7 L573.6,7.1 L570.9,3.8 L568.8,0.0 L568.1,-4.2 L568.8,-8.4 L570.9,-12.1 L574.0,-15.0 L577.5,-17.3 L580.9,-19.1 L584.0,-20.9 L586.9,-22.7 L589.9,-24.5 L593.0,-26.0 L596.5,-26.9 L600.0,-27.0 L603.4,-26.2 L606.6,-24.7 L609.5,-23.0 L612.3,-21.3 L615.0,-19.6 L617.8,-17.8 L620.4,-15.7 L622.6,-13.1 L624.2,-10.0 L625.0,-6.7 L625.3,-3.3 L625.4,-0.0Z"/><path d="M632.0,0.0 L632.2,4.2 L632.7,8.8 L633.2,13.7 L633.1,19.1 L632.0,24.5 L629.3,29.3 L625.1,32.8 L620.0,34.6 L614.4,34.8 L609.1,33.9 L604.3,32.4 L600.0,30.8 L596.1,29.5 L592.4,28.2 L588.9,26.8 L585.5,25.1 L582.5,22.8 L579.6,20.4 L576.9,17.7 L573.9,15.1 L570.5,12.2 L566.8,8.9 L563.3,4.8 L560.8,0.0 L559.8,-5.3 L560.7,-10.5 L563.3,-15.2 L567.2,-18.9 L571.6,-21.8 L575.9,-24.1 L579.8,-26.3 L583.5,-28.5 L587.2,-30.8 L591.2,-32.8 L595.5,-33.9 L600.0,-34.0 L604.3,-32.9 L608.3,-31.1 L612.0,-29.0 L615.5,-26.8 L618.9,-24.7 L622.4,-22.4 L625.7,-19.7 L628.5,-16.5 L630.5,-12.6 L631.5,-8.4 L631.9,-4.2 L632.0,-0.0Z"/><path d="M638.5,0.0 L638.8,5.1 L639.4,10.6 L640.0,16.6 L640.0,23.1 L638.6,29.6 L635.3,35.3 L630.3,39.5 L624.1,41.7 L617.4,42.0 L610.9,40.8 L605.1,39.0 L600.0,37.2 L595.3,35.6 L590.9,34.1 L586.6,32.4 L582.6,30.2 L578.9,27.6 L575.5,24.5 L572.1,21.4 L568.5,18.2 L564.4,14.8 L560.0,10.7 L555.8,5.8 L552.7,0.0 L551.5,-6.4 L552.6,-12.7 L555.8,-18.3 L560.5,-22.8 L565.8,-26.3 L570.9,-29.1 L575.7,-31.7 L580.1,-34.4 L584.6,-37.2 L589.4,-39.5 L594.6,-40.9 L600.0,-41.0 L605.2,-39.7 L610.1,-37.6 L614.5,-35.0 L618.7,-32.3 L622.8,-29.8 L627.0,-27.0 L631.0,-23.8 L634.4,-19.9 L636.7,-15.2 L638.0,-10.2 L638.4,-5.1 L638.5,-0.0Z"/><path d="M645.1,0.0 L645.4,6.0 L646.1,12.4 L646.8,19.4 L646.8,27.0 L645.1,34.6 L641.4,41.4 L635.5,46.3 L628.2,48.8 L620.4,49.2 L612.8,47.8 L606.0,45.7 L600.0,43.5 L594.5,41.6 L589.3,39.9 L584.3,37.9 L579.6,35.4 L575.2,32.3 L571.3,28.7 L567.4,25.1 L563.1,21.3 L558.3,17.3 L553.1,12.6 L548.2,6.8 L544.6,0.0 L543.2,-7.5 L544.5,-14.9 L548.3,-21.4 L553.7,-26.7 L559.9,-30.7 L566.0,-34.0 L571.5,-37.1 L576.7,-40.3 L582.0,-43.5 L587.6,-46.3 L593.7,-47.9 L600.0,-48.0 L606.1,-46.5 L611.8,-44.0 L617.0,-40.9 L621.9,-37.9 L626.7,-34.9 L631.7,-31.7 L636.3,-27.9 L640.3,-23.2 L643.0,-17.8 L644.5,-11.9 L645.0,-5.9 L645.1,-0.0Z"/><path d="M19.2,60.0 L19.6,61.9 L19.7,63.9 L19.1,65.9 L18.0,67.5 L16.3,68.6 L14.3,69.3 L12.3,69.5 L10.5,69.5 L9.0,69.6 L7.7,69.9 L6.4,70.4 L5.0,70.9 L3.5,71.4 L1.9,71.6 L0.3,71.4 L-1.4,71.0 L-3.0,70.5 L-4.7,69.7 L-6.4,68.7 L-8.0,67.5 L-9.3,65.9 L-10.1,64.1 L-10.3,62.0 L-9.8,60.0 L-8.7,58.2 L-7.4,56.7 L-6.2,55.4 L-5.1,54.2 L-4.2,52.9 L-3.4,51.6 L-2.5,50.2 L-1.3,49.0 L0.1,48.2 L1.7,47.7 L3.4,47.7 L5.0,47.9 L6.6,48.2 L8.1,48.4 L9.7,48.7 L11.3,49.1 L12.9,49.7 L14.4,50.6 L15.6,51.9 L16.6,53.3 L17.3,54.9 L18.0,56.5 L18.6,58.2 L19.2,60.0Z"/><path d="M26.8,60.0 L27.5,63.0 L27.6,66.0 L26.7,69.0 L24.9,71.5 L22.3,73.3 L19.3,74.3 L16.2,74.6 L13.5,74.7 L11.1,74.8 L9.1,75.2 L7.1,76.0 L5.0,76.8 L2.7,77.5 L0.2,77.8 L-2.3,77.6 L-4.8,77.0 L-7.3,76.1 L-9.9,74.9 L-12.5,73.4 L-15.0,71.5 L-17.0,69.1 L-18.3,66.2 L-18.5,63.1 L-17.7,60.0 L-16.1,57.2 L-14.1,54.9 L-12.2,52.9 L-10.5,51.0 L-9.2,49.1 L-7.9,47.1 L-6.5,45.0 L-4.7,43.1 L-2.5,41.8 L-0.1,41.1 L2.5,41.1 L5.0,41.4 L7.4,41.8 L9.8,42.2 L12.2,42.6 L14.7,43.2 L17.2,44.1 L19.4,45.6 L21.3,47.5 L22.8,49.7 L23.9,52.2 L24.9,54.7 L25.9,57.2 L26.8,60.0Z"/><path d="M34.5,60.0 L35.4,64.0 L35.5,68.2 L34.4,72.2 L31.9,75.5 L28.4,78.0 L24.3,79.3 L20.2,79.7 L16.4,79.8 L13.3,80.0 L10.5,80.6 L7.8,81.6 L5.0,82.7 L1.9,83.6 L-1.4,84.0 L-4.8,83.8 L-8.2,82.9 L-11.7,81.7 L-15.1,80.1 L-18.6,78.1 L-21.9,75.6 L-24.7,72.3 L-26.4,68.4 L-26.7,64.2 L-25.7,60.0 L-23.5,56.2 L-20.8,53.1 L-18.2,50.4 L-16.0,47.9 L-14.1,45.3 L-12.5,42.5 L-10.6,39.7 L-8.1,37.2 L-5.2,35.4 L-1.8,34.5 L1.6,34.4 L5.0,34.8 L8.2,35.4 L11.4,36.0 L14.7,36.6 L18.1,37.3 L21.4,38.6 L24.5,40.5 L27.0,43.1 L29.0,46.1 L30.6,49.4 L31.9,52.8 L33.2,56.3 L34.5,60.0Z"/><path d="M42.1,60.0 L43.3,65.0 L43.4,70.3 L42.0,75.3 L38.9,79.6 L34.5,82.6 L29.3,84.3 L24.1,84.9 L19.4,85.0 L15.4,85.2 L11.9,85.9 L8.6,87.1 L5.0,88.6 L1.1,89.7 L-3.1,90.2 L-7.4,89.9 L-11.7,88.9 L-16.0,87.3 L-20.4,85.4 L-24.8,82.8 L-28.9,79.6 L-32.4,75.5 L-34.5,70.6 L-35.0,65.3 L-33.6,60.0 L-30.9,55.3 L-27.5,51.3 L-24.2,47.9 L-21.4,44.8 L-19.1,41.5 L-17.0,38.0 L-14.6,34.5 L-11.5,31.3 L-7.8,29.1 L-3.6,27.9 L0.8,27.8 L5.0,28.3 L9.1,29.1 L13.1,29.8 L17.2,30.5 L21.5,31.4 L25.7,33.0 L29.6,35.4 L32.8,38.7 L35.2,42.5 L37.2,46.7 L38.9,50.9 L40.5,55.3 L42.1,60.0Z"/><path d="M49.8,60.0 L51.1,66.1 L51.3,72.4 L49.6,78.5 L45.9,83.6 L40.5,87.3 L34.3,89.3 L28.0,90.0 L22.4,90.1 L17.6,90.3 L13.4,91.2 L9.3,92.7 L5.0,94.5 L0.3,95.9 L-4.8,96.5 L-9.9,96.1 L-15.1,94.8 L-20.3,93.0 L-25.6,90.6 L-30.9,87.5 L-35.9,83.6 L-40.1,78.7 L-42.7,72.8 L-43.2,66.3 L-41.6,60.0 L-38.3,54.3 L-34.2,49.5 L-30.2,45.4 L-26.8,41.6 L-24.1,37.7 L-21.5,33.5 L-18.6,29.2 L-14.9,25.4 L-10.4,22.7 L-5.4,21.3 L-0.1,21.2 L5.0,21.8 L9.9,22.7 L14.8,23.6 L19.7,24.4 L24.9,25.5 L30.0,27.5 L34.6,30.4 L38.5,34.3 L41.5,38.9 L43.8,43.9 L45.8,49.1 L47.9,54.4 L49.8,60.0Z"/><path d="M57.4,60.0 L59.0,67.1 L59.2,74.5 L57.2,81.6 L52.9,87.6 L46.6,91.9 L39.3,94.3 L31.9,95.1 L25.3,95.2 L19.7,95.5 L14.8,96.6 L10.0,98.3 L5.0,100.4 L-0.5,102.0 L-6.4,102.7 L-12.5,102.2 L-18.6,100.8 L-24.6,98.6 L-30.8,95.8 L-37.0,92.2 L-42.9,87.7 L-47.8,81.9 L-50.8,75.0 L-51.4,67.4 L-49.5,60.0 L-45.7,53.3 L-40.9,47.7 L-36.3,42.9 L-32.3,38.5 L-29.0,33.9 L-26.0,29.0 L-22.6,24.0 L-18.4,19.5 L-13.1,16.3 L-7.1,14.7 L-1.0,14.5 L5.0,15.3 L10.7,16.3 L16.4,17.3 L22.3,18.3 L28.3,19.7 L34.2,21.9 L39.7,25.3 L44.2,29.9 L47.7,35.3 L50.4,41.2 L52.8,47.2 L55.2,53.4 L57.4,60.0Z"/></svg>
<div id="hdr"></div>
<div id="icon"><svg width="42" height="42" style="position:absolute;left:0;top:0" fill="#fff"><rect x="11.6" y="12.0" width="4.8" height="4.6" rx="1"/><rect x="17.9" y="12.0" width="4.8" height="4.6" rx="1"/><rect x="24.3" y="12.0" width="4.8" height="4.6" rx="1"/><rect x="11.6" y="18.2" width="4.8" height="4.6" rx="1"/><rect x="17.9" y="18.2" width="4.8" height="4.6" rx="1"/><rect x="24.3" y="18.2" width="4.8" height="4.6" rx="1"/><rect x="11.6" y="24.4" width="4.8" height="4.6" rx="1"/><rect x="17.9" y="24.4" width="4.8" height="4.6" rx="1"/><rect x="24.3" y="24.4" width="4.8" height="4.6" rx="1"/></svg></div>
<div id="setup" class="abs">SETUP</div>
<div id="appm" class="abs">App Manager</div>
<div id="card"></div>
<div id="cls" style="position:absolute;left:0;top:0;width:610px;height:420px;will-change:transform">
<div id="title" class="abs">New Connected App</div>
<div class="btn" style="left:356.5px;width:28.5px"><span>Save</span></div>
<div class="btn" style="left:391px;width:37px"><span>Cancel</span></div>
<div id="band"></div>
<div id="bi" class="abs">Basic Information</div>

<div class="lbl" style="top:205px">Connected App Name</div>
<div class="req" style="top:206px;height:17px"></div>
<div class="inp" style="top:205px;width:367px">LinxDemoApp</div>

<div class="lbl" style="top:227px">API Name</div>
<div class="req" style="top:228px;height:17px"></div>
<div class="inp" style="top:227px;width:367px">LinxDemoApp</div>

<div class="lbl" style="top:249px">Contact Email</div>
<div class="req" style="top:250px;height:17px"></div>
<div class="inp" style="top:249px;width:187px;background:#e8f0fe">support@linx.software</div>

<div class="lbl" style="top:271px">Contact Phone</div>
<div class="inp" style="top:271px;width:187px"></div>

<div class="lbl" style="top:298px">Logo Image URL</div>
<div class="help" style="top:301px"></div>
<div class="inp" style="top:298px;width:367px"></div>
<div class="lnk" style="top:316px"><u>Upload logo image</u> or <u>Choose one of our sample logos</u></div>

<div class="lbl" style="top:331px">Icon URL</div>
<div class="help" style="top:334px"></div>
<div class="inp" style="top:331px;width:367px"></div>
<div class="lnk" style="top:349px"><u>Choose one of our sample logos</u></div>

<div class="lbl" style="top:364px">Info URL</div>
<div class="inp" style="top:364px;width:367px"></div>

<div class="lbl" style="top:386px">Description</div>
<div class="help" style="top:389px"></div>
<div class="inp" style="top:386px;width:367px"></div>
</div>
</body></html>
